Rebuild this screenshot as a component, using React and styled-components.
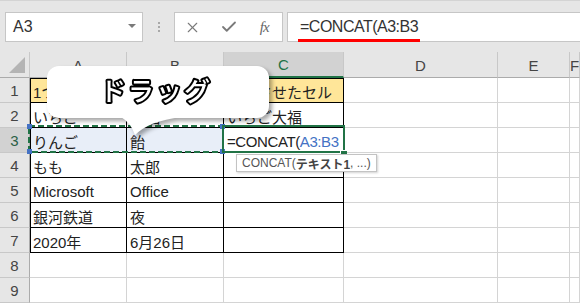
import * as React from 'react';
import styled, { createGlobalStyle } from 'styled-components';
import { X, Check } from 'lucide-react';

const GlobalStyle = createGlobalStyle`
    html, body {
        margin: 0;
        padding: 0;
        background: #ffffff;
    }
    body {
        font-family: "Liberation Sans", "Noto Sans CJK JP", sans-serif;
    }
`;

const Page = styled.div`
    width: 580px;
    height: 304px;
    overflow: hidden;
    background: #ffffff;
`;

/* formula bar */
const TopBar = styled.div`
    height: 52px;
    box-sizing: border-box;
    background: #e6e6e6;
    border-top: 1px solid #d4d4d4;
    padding: 11px 0 0 5px;
    display: flex;
    align-items: flex-start;
`;

const NameBox = styled.div`
    width: 138px;
    height: 30px;
    box-sizing: border-box;
    background: #fff;
    border: 1px solid #c6c6c6;
    display: flex;
    align-items: center;
    justify-content: space-between;
    padding: 0 6px 0 7px;
    font-size: 16px;
    color: #333;
`;

const DropArrow = styled.span`
    width: 0;
    height: 0;
    border-left: 4px solid transparent;
    border-right: 4px solid transparent;
    border-top: 4px solid #7a7a7a;
    margin-top: -3px;
`;

const Grip = styled.div`
    width: 31px;
    height: 30px;
    display: flex;
    flex-direction: column;
    align-items: center;
    justify-content: center;
    gap: 2px;
`;

const GripDot = styled.span`
    width: 2px;
    height: 2px;
    background: #a8a8a8;
`;

const ButtonBox = styled.div`
    width: 109px;
    height: 30px;
    box-sizing: border-box;
    background: #fff;
    border: 1px solid #c6c6c6;
    display: flex;
    align-items: center;
`;

const BarButton = styled.div`
    width: 36px;
    height: 28px;
    display: flex;
    align-items: center;
    justify-content: center;
    color: #7a7a7a;
`;

const FxText = styled.span`
    font-family: "Liberation Serif", serif;
    font-style: italic;
    font-size: 15px;
    color: #666;
    letter-spacing: -1px;
`;

const FormulaBox = styled.div`
    flex: 1;
    height: 30px;
    box-sizing: border-box;
    margin-left: 4px;
    background: #fff;
    border: 1px solid #c6c6c6;
    border-right: none;
    padding-left: 11px;
    display: flex;
    align-items: center;
`;

const FormulaText = styled.span`
    position: relative;
    font-size: 16px;
    letter-spacing: -0.5px;
    color: #333;
    padding: 0 1px;

    &::after {
        content: "";
        position: absolute;
        left: -1px;
        right: -1px;
        bottom: -6px;
        height: 3px;
        background: #ff0000;
    }
`;

/* sheet */
const Sheet = styled.div`
    position: relative;
    display: grid;
    grid-template-columns: 30px 97px 97px 120px 154px 72px 1fr;
    grid-template-rows: 26px;
    grid-auto-rows: 25px;
`;

const Corner = styled.div`
    position: relative;
    background: #e6e6e6;
    border-right: 1px solid #c8c8c8;
    border-bottom: 1px solid #ababab;

    &::after {
        content: "";
        position: absolute;
        right: 4px;
        bottom: 4px;
        width: 0;
        height: 0;
        border-left: 16px solid transparent;
        border-bottom: 16px solid #b4b4b4;
    }
`;

const ColHead = styled.div`
    background: ${p => (p.$active ? '#d2d2d2' : '#e6e6e6')};
    color: ${p => (p.$active ? '#217346' : '#444')};
    border-right: 1px solid #c8c8c8;
    border-bottom: ${p => (p.$active ? '2px solid #217346' : '1px solid #ababab')};
    display: flex;
    align-items: center;
    justify-content: center;
    font-size: 15px;
    padding-top: 1px;
`;

const RowHead = styled.div`
    background: ${p => (p.$active ? '#d2d2d2' : '#e6e6e6')};
    color: ${p => (p.$active ? '#2b5f47' : '#444')};
    border-right: 1px solid #ababab;
    border-bottom: 1px solid #c8c8c8;
    display: flex;
    align-items: center;
    justify-content: center;
    font-size: 15px;
`;

const Cell = styled.div`
    box-sizing: border-box;
    background: ${p => p.$fill || '#fff'};
    border-right: 1px solid ${p => (p.$framed ? '#000' : '#d4d4d4')};
    border-bottom: 1px solid ${p => (p.$framed ? '#000' : '#d4d4d4')};
    box-shadow: ${p => {
        const s = [];
        if (p.$leftEdge) s.push('inset 1px 0 0 #000');
        if (p.$topEdge) s.push('inset 0 1px 0 #000');
        return s.length ? s.join(', ') : 'none';
    }};
    padding: 2px 0 0 3px;
    display: flex;
    align-items: center;
    white-space: nowrap;
    overflow: hidden;
    font-size: 15px;
    letter-spacing: ${p => (p.$tight ? '-0.4px' : 'normal')};
    color: #222;
`;

const RefText = styled.span`
    color: #4472c4;
`;

/* overlays */
const Ants = styled.svg`
    position: absolute;
    left: 28px;
    top: 73px;
    overflow: visible;
`;

const Handle = styled.span`
    position: absolute;
    width: 5px;
    height: 5px;
    background: #4472c4;
    left: ${p => p.$x}px;
    top: ${p => p.$y}px;
`;

const ActiveCell = styled.div`
    position: absolute;
    left: 222px;
    top: 73px;
    width: 123px;
    height: 28px;
    box-sizing: border-box;
    border: 2px solid #217346;
`;

const FillHandle = styled.span`
    position: absolute;
    left: 340px;
    top: 98px;
    width: 6px;
    height: 6px;
    background: #217346;
    border-top: 1px solid #fff;
    border-left: 1px solid #fff;
`;

const Tip = styled.div`
    position: absolute;
    left: 236px;
    top: 102px;
    height: 18px;
    box-sizing: border-box;
    padding: 0 5px;
    background: #fff;
    border: 1px solid #c3c3c3;
    box-shadow: 1px 1px 2px rgba(0, 0, 0, 0.18);
    display: flex;
    align-items: center;
    font-size: 12px;
    color: #555;
    white-space: pre;
`;

const TipArg = styled.span`
    font-weight: 700;
    color: #444;
`;

const Callout = styled.div`
    position: absolute;
    left: 47px;
    top: 14px;
    width: 222px;
    height: 52px;
    filter: drop-shadow(3px 3px 2px rgba(0, 0, 0, 0.35));
`;

const Bubble = styled.div`
    width: 100%;
    height: 100%;
    background: #fff;
    border-radius: 12px;
    display: flex;
    align-items: center;
    justify-content: center;
`;

const BubbleTail = styled.svg`
    position: absolute;
    left: 70px;
    top: 51px;
`;

const DragLabel = styled.svg`
    display: block;
    margin-left: -4px;
    overflow: visible;
`;

const DragText = styled.text`
    font-family: "Noto Sans CJK JP", sans-serif;
    font-weight: 500;
    font-size: 26px;
    letter-spacing: 2px;
    fill: #ffffff;
    stroke: #000000;
    stroke-width: 4px;
    stroke-linejoin: round;
    paint-order: stroke fill;
`;

const columns = ['A', 'B', 'C', 'D', 'E', 'F'];

const rows = [
    ['1つ目', '2つ目', '結合させたセル'],
    ['いちご', '大福', 'いちご大福'],
    ['りんご', '飴', null],
    ['もも', '太郎', ''],
    ['Microsoft', 'Office', ''],
    ['銀河鉄道', '夜', ''],
    ['2020年', '6月26日', ''],
    null,
    null,
];

function DataRow({ index, values })
{
    const n = index + 1;
    const cells = [];

    for (let c = 0; c < 6; c++) {
        const inTable = values && c < 3;
        let fill = null;
        let content = inTable ? values[c] : '';
        let tight = false;

        if (n === 1 && inTable) fill = '#ffe699';
        if (n === 3 && c < 2) fill = '#e8eef8';
        if (n === 3 && c === 2) {
            tight = true;
            content = (
                <>=CONCAT(<RefText>A3:B3</RefText></>
            );
        }

        cells.push(
            <Cell
                key={c}
                $fill={fill}
                $tight={tight}
                $framed={inTable}
                $leftEdge={inTable && c === 0}
                $topEdge={inTable && n === 1}
            >
                {content}
            </Cell>
        );
    }

    return (
        <>
            <RowHead $active={n === 3}>{n}</RowHead>
            {cells}
        </>
    );
}

export default function App()
{
    return (
        <Page>
            <GlobalStyle />
            <TopBar>
                <NameBox>
                    <span>A3</span>
                    <DropArrow />
                </NameBox>
                <Grip>
                    <GripDot />
                    <GripDot />
                    <GripDot />
                </Grip>
                <ButtonBox>
                    <BarButton><X size={17} strokeWidth={1.6} /></BarButton>
                    <BarButton><Check size={18} strokeWidth={2.4} /></BarButton>
                    <BarButton><FxText>fx</FxText></BarButton>
                </ButtonBox>
                <FormulaBox>
                    <FormulaText>=CONCAT(A3:B3</FormulaText>
                </FormulaBox>
            </TopBar>

            <Sheet>
                <Corner />
                {columns.map(col => (
                    <ColHead key={col} $active={col === 'C'}>{col}</ColHead>
                ))}
                {rows.map((values, i) => (
                    <DataRow key={i} index={i} values={values} />
                ))}

                <Ants width="196" height="28">
                    <rect x="1" y="1" width="194" height="26" fill="none"
                        stroke="#217346" strokeWidth="2" strokeDasharray="6 3" />
                </Ants>
                <Handle $x={27} $y={72} />
                <Handle $x={220} $y={72} />
                <Handle $x={27} $y={97} />
                <Handle $x={220} $y={97} />

                <ActiveCell />
                <FillHandle />

                <Tip>CONCAT(<TipArg>テキスト1</TipArg>, ...)</Tip>

                <Callout>
                    <Bubble>
                        <DragLabel width="112" height="32">
                            <DragText x="56" y="25" textAnchor="middle">ドラッグ</DragText>
                        </DragLabel>
                    </Bubble>
                    <BubbleTail width="70" height="20" viewBox="0 0 70 20">
                        <path d="M4 0 Q 14 6 18 18 Q 32 4 64 0 Z" fill="#fff" />
                    </BubbleTail>
                </Callout>
            </Sheet>
        </Page>
    );
}
